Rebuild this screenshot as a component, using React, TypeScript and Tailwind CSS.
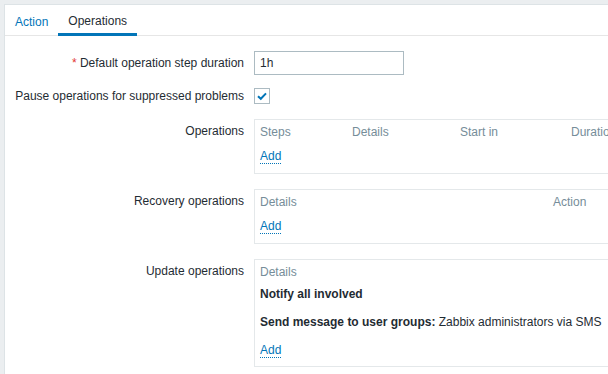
import React from "react";

const font = { fontFamily: '"Liberation Sans", Arial, sans-serif' };

const AddLink = () => (
  <span className="text-[#0275b8] border-b border-dotted border-[#0275b8] leading-[14px]">
    Add
  </span>
);

const Row = ({
  label,
  children,
  className = "",
  labelClass = "",
}: {
  label: React.ReactNode;
  children: React.ReactNode;
  className?: string;
  labelClass?: string;
}) => (
  <div className={`flex ${className}`}>
    <div
      className={`w-[239px] shrink-0 text-right text-[#1f2c33] leading-[14px] ${labelClass}`}
    >
      {label}
    </div>
    <div className="ml-[10px] min-w-0">{children}</div>
  </div>
);

const App = () => {
  return (
    <div
      className="w-full h-screen overflow-hidden bg-[#ebeef0] pl-[4px] pt-[4px] text-[12px]"
      style={font}
    >
      <div className="h-full bg-white border-l border-t border-[#dde3e6]">
        {/* tabs */}
        <div className="flex h-[31px] border-b border-[#e6e6e6]">
          <div className="px-[10px] pt-[3px] flex items-center h-[30px] text-[#0275b8]">
            Action
          </div>
          <div className="px-[10px] pt-[3px] flex items-center h-[31px] border-b-[3px] border-[#0275b8] text-[#1f2c33]">
            Operations
          </div>
        </div>

        <div className="pt-[15px]">
          <Row
            label={
              <>
                <span className="text-[#e33734]">*</span> Default operation step
                duration
              </>
            }
            labelClass="pt-[5px]"
          >
            <div className="w-[150px] h-[24px] border border-[#acbbc2] px-[5px] flex items-center text-[#1f2c33]">
              1h
            </div>
          </Row>

          <Row
            label="Pause operations for suppressed problems"
            className="mt-[13px]"
            labelClass="pt-[1px]"
          >
            <div className="w-[16px] h-[16px] border border-[#acbbc2] flex items-center justify-center">
              <svg width="12" height="12" viewBox="0 0 12 12">
                <path
                  d="M2 6.2 L4.8 8.8 L10 3.4"
                  fill="none"
                  stroke="#0275b8"
                  strokeWidth="2"
                />
              </svg>
            </div>
          </Row>

          <Row label="Operations" className="mt-[15px]" labelClass="pt-[5px]">
            <div className="w-[420px] h-[55px] border border-[#e4e8ea] px-[5px] pt-[5px]">
              <div className="flex leading-[14px] text-[#768d99]">
                <div className="w-[92px]">Steps</div>
                <div className="w-[108px]">Details</div>
                <div className="w-[111px]">Start in</div>
                <div>Duration</div>
              </div>
              <div className="mt-[8px]">
                <AddLink />
              </div>
            </div>
          </Row>

          <Row label="Recovery operations" className="mt-[15px]" labelClass="pt-[5px]">
            <div className="w-[420px] h-[55px] border border-[#e4e8ea] px-[5px] pt-[5px]">
              <div className="flex leading-[14px] text-[#768d99]">
                <div className="w-[293px]">Details</div>
                <div>Action</div>
              </div>
              <div className="mt-[8px]">
                <AddLink />
              </div>
            </div>
          </Row>

          <Row label="Update operations" className="mt-[15px]" labelClass="pt-[5px]">
            <div className="w-[420px] h-[108px] border border-[#e4e8ea] px-[5px] pt-[5px] text-[#1f2c33]">
              <div className="leading-[14px] text-[#768d99]">Details</div>
              <div className="mt-[8px] leading-[14px] font-bold">
                Notify all involved
              </div>
              <div className="mt-[14px] leading-[14px]">
                <span className="font-bold">Send message to user groups:</span>{" "}
                Zabbix administrators via SMS
              </div>
              <div className="mt-[12px]">
                <AddLink />
              </div>
            </div>
          </Row>
        </div>
      </div>
    </div>
  );
};

export default App;
